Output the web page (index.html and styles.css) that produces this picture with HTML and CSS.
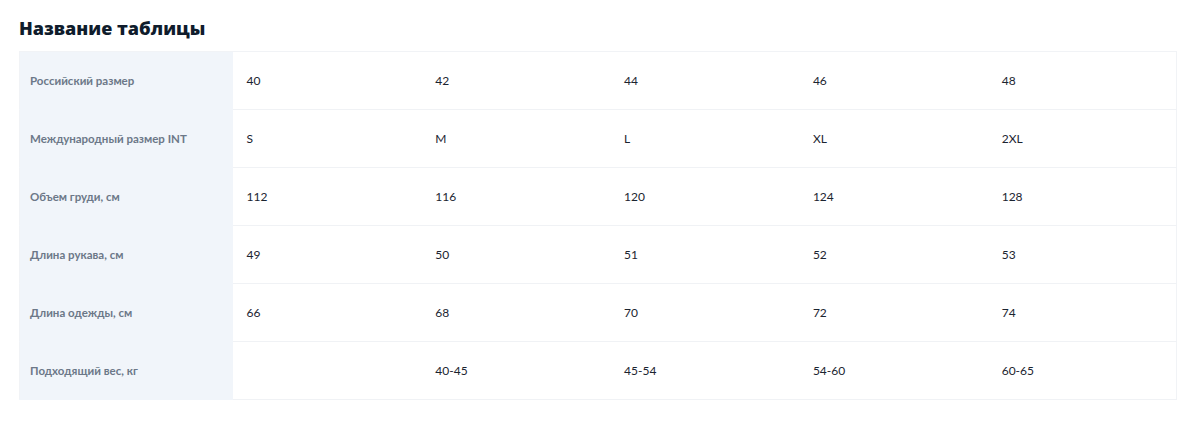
FILE: index.html
```html
<!DOCTYPE html>
<html lang="ru">
<head>
<meta charset="utf-8">
<link rel="stylesheet" href="styles.css">
</head>
<body>
<div class="wrap">
  <h2 class="title">Название таблицы</h2>
  <table class="sizes">
    <tbody>
      <tr><th>Российский размер</th><td>40</td><td>42</td><td>44</td><td>46</td><td>48</td></tr>
      <tr><th>Международный размер INT</th><td>S</td><td>M</td><td>L</td><td>XL</td><td>2XL</td></tr>
      <tr><th>Объем груди, см</th><td>112</td><td>116</td><td>120</td><td>124</td><td>128</td></tr>
      <tr><th>Длина рукава, см</th><td>49</td><td>50</td><td>51</td><td>52</td><td>53</td></tr>
      <tr><th>Длина одежды, см</th><td>66</td><td>68</td><td>70</td><td>72</td><td>74</td></tr>
      <tr><th>Подходящий вес, кг</th><td></td><td>40-45</td><td>45-54</td><td>54-60</td><td>60-65</td></tr>
    </tbody>
  </table>
</div>
</body>
</html>
```
FILE: styles.css
```css
html, body {
  margin: 0;
  padding: 0;
  background: #ffffff;
}
body {
  font-family: Lato, "Open Sans", sans-serif;
  color: #14202e;
}
.wrap {
  padding: 15px 23px 0 19px;
}
.title {
  margin: 0 0 10px 0;
  font-family: "Open Sans", Lato, sans-serif;
  font-size: 18px;
  line-height: 26px;
  font-weight: 800;
  color: #0f1c2c;
}
.sizes {
  width: 1158px;
  border-collapse: collapse;
  table-layout: fixed;
  border: 1px solid #f1f3f6;
}
.sizes th {
  width: 213px;
  box-sizing: border-box;
  background: #f1f5fa;
  text-align: left;
  padding: 0 0 0 10px;
  font-size: 11.5px;
  font-weight: 700;
  color: #6c7888;
  height: 57px;
  border-bottom: 1px solid #f1f5fa;
}
.sizes td {
  padding: 0 0 0 14px;
  font-size: 12px;
  font-weight: 400;
  color: #1b2430;
  height: 57px;
  border-bottom: 1px solid #f0f2f5;
}
```
